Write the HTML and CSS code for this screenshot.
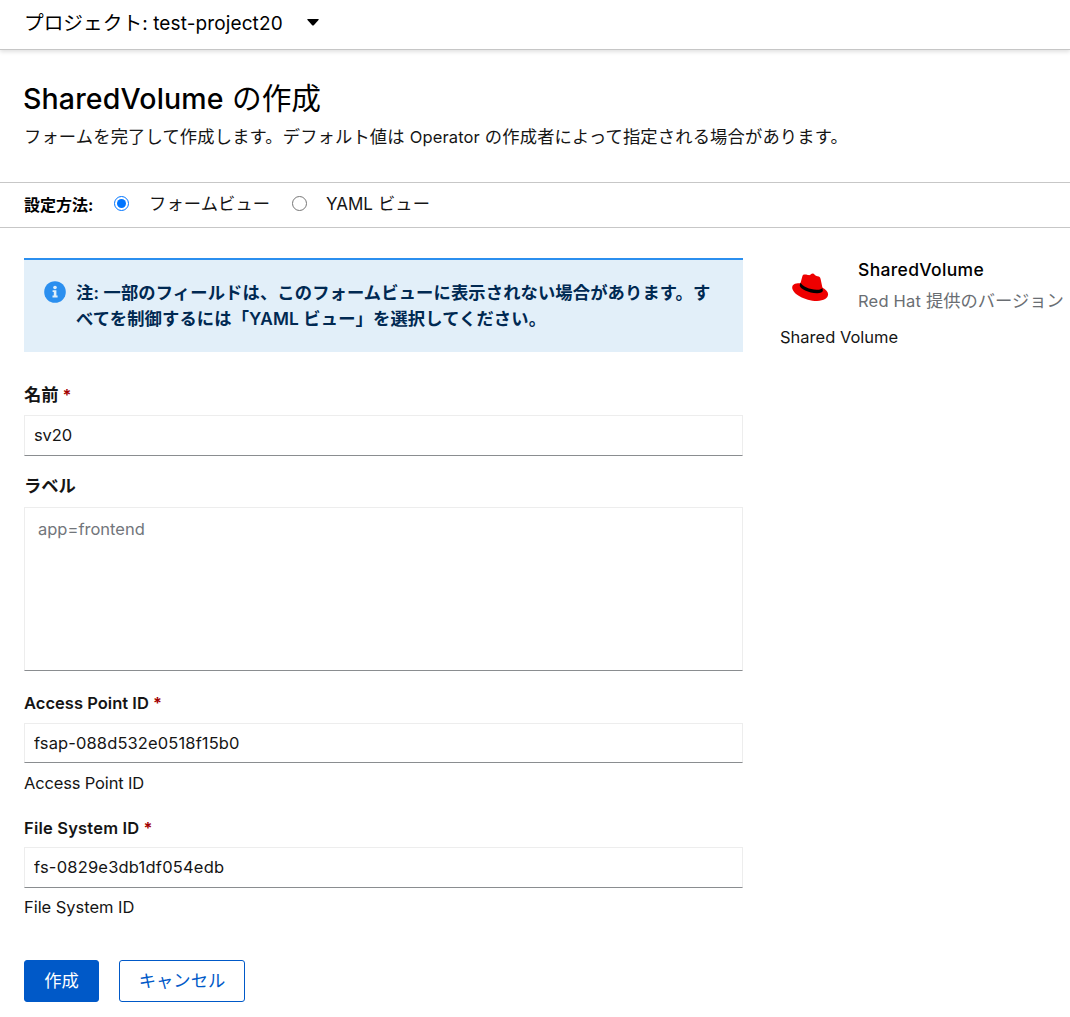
FILE: index.html
```html
<!DOCTYPE html>
<html lang="ja">
<head>
<meta charset="utf-8">
<title>SharedVolume の作成</title>
<link rel="stylesheet" href="styles.css">
</head>
<body>
<header class="project-bar">
  <span>プロジェクト<span class="latin project-name">: test-project20</span></span>
  <svg class="caret" width="12" height="7" viewBox="0 0 12 7"><path d="M.8 0h10.4q.9.2.3 1L6.8 6.2q-.8.7-1.6 0L.5 1Q-.1.2.8 0z"/></svg>
</header>
<section class="intro">
  <h1><span class="latin title-name">SharedVolume</span> の作成</h1>
  <p>フォームを完了して作成します。デフォルト値は <span class="latin operator">Operator</span> の作成者によって指定される場合があります。</p>
</section>
<div class="view-switch">
  <strong>設定方法:</strong>
  <label class="form-view"><input type="radio" name="view" checked><span>フォームビュー</span></label>
  <label class="yaml-view"><input type="radio" name="view"><span><span class="latin yaml">YAML</span> ビュー</span></label>
</div>
<main class="content">
  <form class="form">
    <div class="alert">
      <svg class="info" width="22" height="22" viewBox="0 0 22 22"><circle cx="11" cy="11" r="10.8" fill="#2b8fef"/><circle cx="11" cy="6.5" r="1.8" fill="#e2eff9"/><path d="M8.6 9.2h3.8v5.4h1.2v1.8H8.5v-1.8h1.3V11H8.6z" fill="#e2eff9"/></svg>
      <p>注: 一部のフィールドは、このフォームビューに表示されない場合があります。すべてを制御するには「YAML ビュー」を選択してください。</p>
    </div>
    <label class="label name-label" for="name">名前<span class="required">*</span></label>
    <input class="field name-field latin" id="name" value="sv20">
    <label class="label labels-label" for="labels">ラベル</label>
    <textarea class="field area latin" id="labels" placeholder="app=frontend"></textarea>
    <label class="label latin access-label" for="access"><span>Access Point ID</span><span class="required">*</span></label>
    <input class="field latin access-field" id="access" value="fsap-088d532e0518f15b0">
    <p class="help latin access-help">Access Point ID</p>
    <label class="label latin system-label" for="system"><span>File System ID</span><span class="required">*</span></label>
    <input class="field latin system-field" id="system" value="fs-0829e3db1df054edb">
    <p class="help latin system-help">File System ID</p>
    <div class="actions">
      <button type="button" class="button primary">作成</button>
      <button type="button" class="button secondary">キャンセル</button>
    </div>
  </form>
  <aside class="provider">
    <div class="provider-head">
      <svg class="hat" width="37" height="29" viewBox="0 0 37 29">
        <path d="M8.6 10.2C3 10 .2 11.4.2 14.4.2 20.6 12.6 27.9 25 27.9c6.8 0 11.1-2.8 11.1-6.6 0-2.7-2.2-5-6-6.9z" fill="#e00"/>
        <path d="m8 12 2.3-8.6c.6-1.9 1.4-2.3 3.8-1.8 2.1.4 3.1 1 4.2.2 2-1.7 3.3-1.5 4.2-.2.7 1 1.6 1.4 3 1.6 2 .3 2.6 1 3.1 2.7l2 9.6c.6 2.9-2.3 3.8-5.8 3.8C18.1 19.3 8.4 15.6 8 12z" fill="#e00"/>
        <path d="M8.6 9.6c1.5 4.1 9.8 7.3 16.6 7.1 2.7-.1 4.4-.6 5.1-1.8l.6 2.9c-.3 1.8-2.7 2.5-6.1 2.4C16.9 20 7.4 15.6 7.7 12.2z"/>
      </svg>
      <div class="provider-text">
        <h2 class="latin">SharedVolume</h2>
        <p><span class="latin red-hat">Red Hat</span> 提供のバージョン</p>
      </div>
    </div>
    <p class="description latin">Shared Volume</p>
  </aside>
</main>
</body>
</html>
```
FILE: styles.css
```css
* { box-sizing: border-box; }
body {
  margin: 0;
  color: #151515;
  background: #fff;
  font: 17.3px/26px Inter, "Noto Sans CJK JP", sans-serif;
}
h1, h2, p { margin: 0; }
.latin { font-family: Inter, "Noto Sans CJK JP", sans-serif; font-size: 16.5px; letter-spacing: -.1px; }
.project-bar {
  display: flex;
  align-items: flex-start;
  height: 50px;
  padding: 9px 24px 0;
  gap: 24px;
  border-bottom: 1px solid #c6c6c6;
  box-shadow: 0 2px 4px rgba(0,0,0,.12);
  font-size: 19.7px;
  line-height: 28px;
  color: #000;
  white-space: nowrap;
}
.project-name { font-size: 19px; letter-spacing: .12px; }
.caret { margin-top: 10px; }
.intro { height: 132px; padding: 28px 23px 0; white-space: nowrap; }
h1 { font-size: 29.7px; line-height: 40px; font-weight: 400; color: #000; }
.title-name { font-size: 28.5px; font-weight: 500; letter-spacing: .15px; }
.intro p { line-height: 26px; margin: 5px 0 0 1px; letter-spacing: .15px; }
.intro .operator { letter-spacing: .12px; }
.view-switch {
  display: flex;
  height: 46px;
  padding: 0 24px;
  border: solid #c7c7c7;
  border-width: 1px 0;
  align-items: center;
  white-space: nowrap;
}
.view-switch strong { color: #000; font-size: 16px; width: 90px; }
.view-switch label { display: flex; align-items: center; margin-bottom: 3px; letter-spacing: .1px; }
.view-switch input { width: 15px; height: 15px; margin: 0 20px 0 0; }
.form-view { width: 178px; }
.yaml-view input { margin-right: 19px; }
.yaml-view .yaml { font-size: 17px; letter-spacing: 0; }
.content { display: flex; padding: 30px 0 0 24px; gap: 37px; }
.form { width: 719px; flex: none; display: flex; flex-direction: column; }
.alert {
  height: 94px;
  padding: 20px 20px 0 20px;
  border-top: 2px solid #2b8fef;
  background: #e2eff9;
  display: flex;
  gap: 10px;
  color: #002952;
  font-weight: 600;
  letter-spacing: .13px;
}
.alert p { width: 640px; }
.info { flex: none; margin-top: 1px; }
.label { font-weight: 700; line-height: 26px; display: flex; gap: 4px; }
.label.latin { font-weight: 600; letter-spacing: .03px; }
.required { color: #a30000; font: 700 16px/26px Inter, sans-serif; }
.name-label { margin-top: 30px; }
.labels-label { margin-top: 17px; }
.field {
  display: block;
  width: 100%;
  height: 41px;
  margin: 0;
  padding: 0 9px;
  border: 1px solid #ededed;
  border-bottom-color: #8a8d90;
  border-radius: 0;
  background: #fff;
  color: #151515;
  resize: none;
  outline: 0;
}
.name-field { margin-top: 7px; padding-bottom: 2px; }
.area { height: 164px; margin-top: 8px; padding: 8px 13px; line-height: 26px; letter-spacing: 0; }
.area::placeholder { color: #72767b; opacity: 1; }
.access-label { margin-top: 19px; }
.access-field { margin-top: 7px; height: 40px; letter-spacing: .12px; }
.help { line-height: 26px; margin-top: 7px; }
.access-help { letter-spacing: -.16px; }
.system-label { margin-top: 19px; }
.label.system-label { letter-spacing: .2px; }
.system-field { margin-top: 6px; padding-bottom: 2px; letter-spacing: .2px; }
.system-help { margin-top: 6px; letter-spacing: -.04px; }
.actions { display: flex; gap: 20px; margin-top: 40px; }
.button {
  height: 42px;
  padding: 0;
  border: 1px solid #0059c8;
  border-radius: 3px;
  font: 17.3px/26px Inter, "Noto Sans CJK JP", sans-serif;
}
.primary { width: 75px; background: #0059c8; color: #fff; }
.secondary { width: 126px; background: #fff; color: #0059c8; }
.provider { flex: none; white-space: nowrap; }
.provider-head { display: flex; height: 66px; padding-left: 12px; }
.hat { margin: 15px 29px 0 0; }
.provider-text h2 { color: #000; font-size: 17.5px; font-weight: 500; line-height: 24px; letter-spacing: .33px; }
.provider-text p { margin-top: 6px; color: #6a6e73; }
.provider-text .red-hat { letter-spacing: .2px; }
.description { line-height: 26px; letter-spacing: 0; }
```
